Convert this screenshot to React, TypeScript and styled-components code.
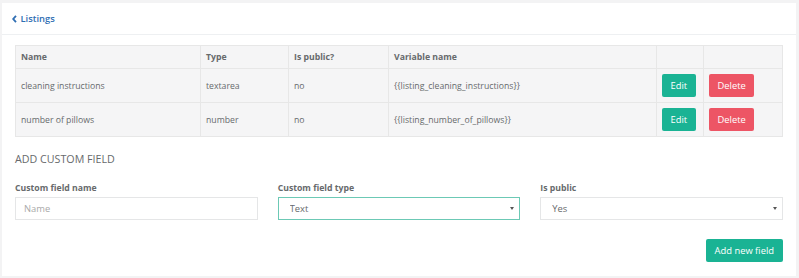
import styled, { createGlobalStyle } from "styled-components";

const GlobalStyle = createGlobalStyle`
  html, body {
    margin: 0;
    padding: 0;
    background: #f3f3f4;
    font-family: "Open Sans", "Liberation Sans", sans-serif;
    color: #676a6c;
  }
  * { box-sizing: border-box; }
`;

type Field = {
  name: string;
  type: string;
  isPublic: string;
  variable: string;
};

const fields: Field[] = [
  {
    name: "cleaning instructions",
    type: "textarea",
    isPublic: "no",
    variable: "{{listing_cleaning_instructions}}",
  },
  {
    name: "number of pillows",
    type: "number",
    isPublic: "no",
    variable: "{{listing_number_of_pillows}}",
  },
];

const ChevronLeft = () => (
  <svg width="5" height="8" viewBox="0 0 5 8">
    <polyline
      points="4,0.8 1.2,4 4,7.2"
      fill="none"
      stroke="currentColor"
      strokeWidth="1.8"
    />
  </svg>
);

const App = () => {
  return (
    <>
      <GlobalStyle />
      <Card>
        <CardHeader>
          <BackLink href="#">
            <ChevronLeft />
            Listings
          </BackLink>
        </CardHeader>
        <CardBody>
          <Table>
            <colgroup>
              <col style={{ width: 185 }} />
              <col style={{ width: 88 }} />
              <col style={{ width: 100 }} />
              <col style={{ width: 268 }} />
              <col style={{ width: 47 }} />
              <col />
            </colgroup>
            <thead>
              <tr>
                <Th>Name</Th>
                <Th>Type</Th>
                <Th>Is public?</Th>
                <Th>Variable name</Th>
                <Th />
                <Th />
              </tr>
            </thead>
            <tbody>
              {fields.map((f) => (
                <tr key={f.name}>
                  <Td>{f.name}</Td>
                  <Td>{f.type}</Td>
                  <Td>{f.isPublic}</Td>
                  <Td>{f.variable}</Td>
                  <Td>
                    <Button $variant="primary">Edit</Button>
                  </Td>
                  <Td>
                    <Button $variant="danger">Delete</Button>
                  </Td>
                </tr>
              ))}
            </tbody>
          </Table>

          <SectionTitle>ADD CUSTOM FIELD</SectionTitle>

          <FormRow>
            <FormGroup>
              <Label>Custom field name</Label>
              <Input placeholder="Name" />
            </FormGroup>
            <FormGroup>
              <Label>Custom field type</Label>
              <SelectWrap>
                <Select $focused defaultValue="text">
                  <option value="text">Text</option>
                  <option value="textarea">Textarea</option>
                  <option value="number">Number</option>
                </Select>
              </SelectWrap>
            </FormGroup>
            <FormGroup>
              <Label>Is public</Label>
              <SelectWrap>
                <Select defaultValue="yes">
                  <option value="yes">Yes</option>
                  <option value="no">No</option>
                </Select>
              </SelectWrap>
            </FormGroup>
          </FormRow>

          <Actions>
            <Button $variant="primary" $large>
              Add new field
            </Button>
          </Actions>
        </CardBody>
      </Card>
    </>
  );
};

export default App;

const Card = styled.div`
  margin: 3px 3px 0 2px;
  height: 273px;
  background: #fff;
`;

const CardHeader = styled.div`
  height: 32px;
  padding: 0 10px;
  display: flex;
  align-items: center;
  border-bottom: 1px solid #eef0f2;
`;

const BackLink = styled.a`
  display: flex;
  align-items: center;
  gap: 3.5px;
  color: #2f6eb3;
  font-size: 9.4px;
  font-weight: 600;
  text-decoration: none;
`;

const CardBody = styled.div`
  padding: 10px 13px 0;
`;

const Table = styled.table`
  width: 100%;
  table-layout: fixed;
  border-collapse: collapse;
  background: #f5f5f6;
  border: 1px solid #e7e7e7;
  font-size: 8.7px;
`;

const Th = styled.th`
  height: 23px;
  padding: 0 5px;
  text-align: left;
  font-weight: 700;
  border: 1px solid #e7e7e7;
`;

const Td = styled.td`
  height: 34px;
  padding: 0 5px;
  border: 1px solid #e7e7e7;
  white-space: nowrap;
`;

const Button = styled.button<{ $variant: "primary" | "danger"; $large?: boolean }>`
  height: 23px;
  padding: ${({ $large }) => ($large ? "0 9px" : "0 8.5px")};
  border: none;
  border-radius: 2px;
  color: #fff;
  font-family: inherit;
  font-size: 9.4px;
  background: ${({ $variant }) => ($variant === "primary" ? "#1ab394" : "#ed5565")};
  cursor: pointer;
`;

const SectionTitle = styled.h3`
  margin: 15px 0 0;
  font-size: 10.7px;
  font-weight: 400;
  line-height: 14px;
`;

const FormRow = styled.div`
  display: grid;
  grid-template-columns: repeat(3, 1fr);
  gap: 20px;
  margin-top: 16px;
`;

const FormGroup = styled.div`
  display: flex;
  flex-direction: column;
  gap: 3px;
`;

const Label = styled.label`
  font-size: 8.7px;
  font-weight: 700;
  line-height: 12px;
`;

const Input = styled.input`
  display: block;
  height: 23px;
  padding: 0 8px;
  border: 1px solid #e5e6e7;
  font-family: inherit;
  font-size: 9.4px;
  color: #676a6c;
  outline: none;
  &::placeholder {
    color: #a9a9a9;
  }
`;

const SelectWrap = styled.div`
  position: relative;
  &::after {
    content: "";
    position: absolute;
    right: 6px;
    top: 10px;
    border-left: 2px solid transparent;
    border-right: 2px solid transparent;
    border-top: 3px solid #555;
    pointer-events: none;
  }
`;

const Select = styled.select<{ $focused?: boolean }>`
  display: block;
  width: 100%;
  height: 23px;
  padding: 0 11px;
  appearance: none;
  background: #fff;
  border: 1px solid ${({ $focused }) => ($focused ? "#6cc9b5" : "#e5e6e7")};
  border-radius: 0;
  font-family: inherit;
  font-size: 9.4px;
  color: #676a6c;
  outline: none;
`;

const Actions = styled.div`
  display: flex;
  justify-content: flex-end;
  margin-top: 19px;
`;
